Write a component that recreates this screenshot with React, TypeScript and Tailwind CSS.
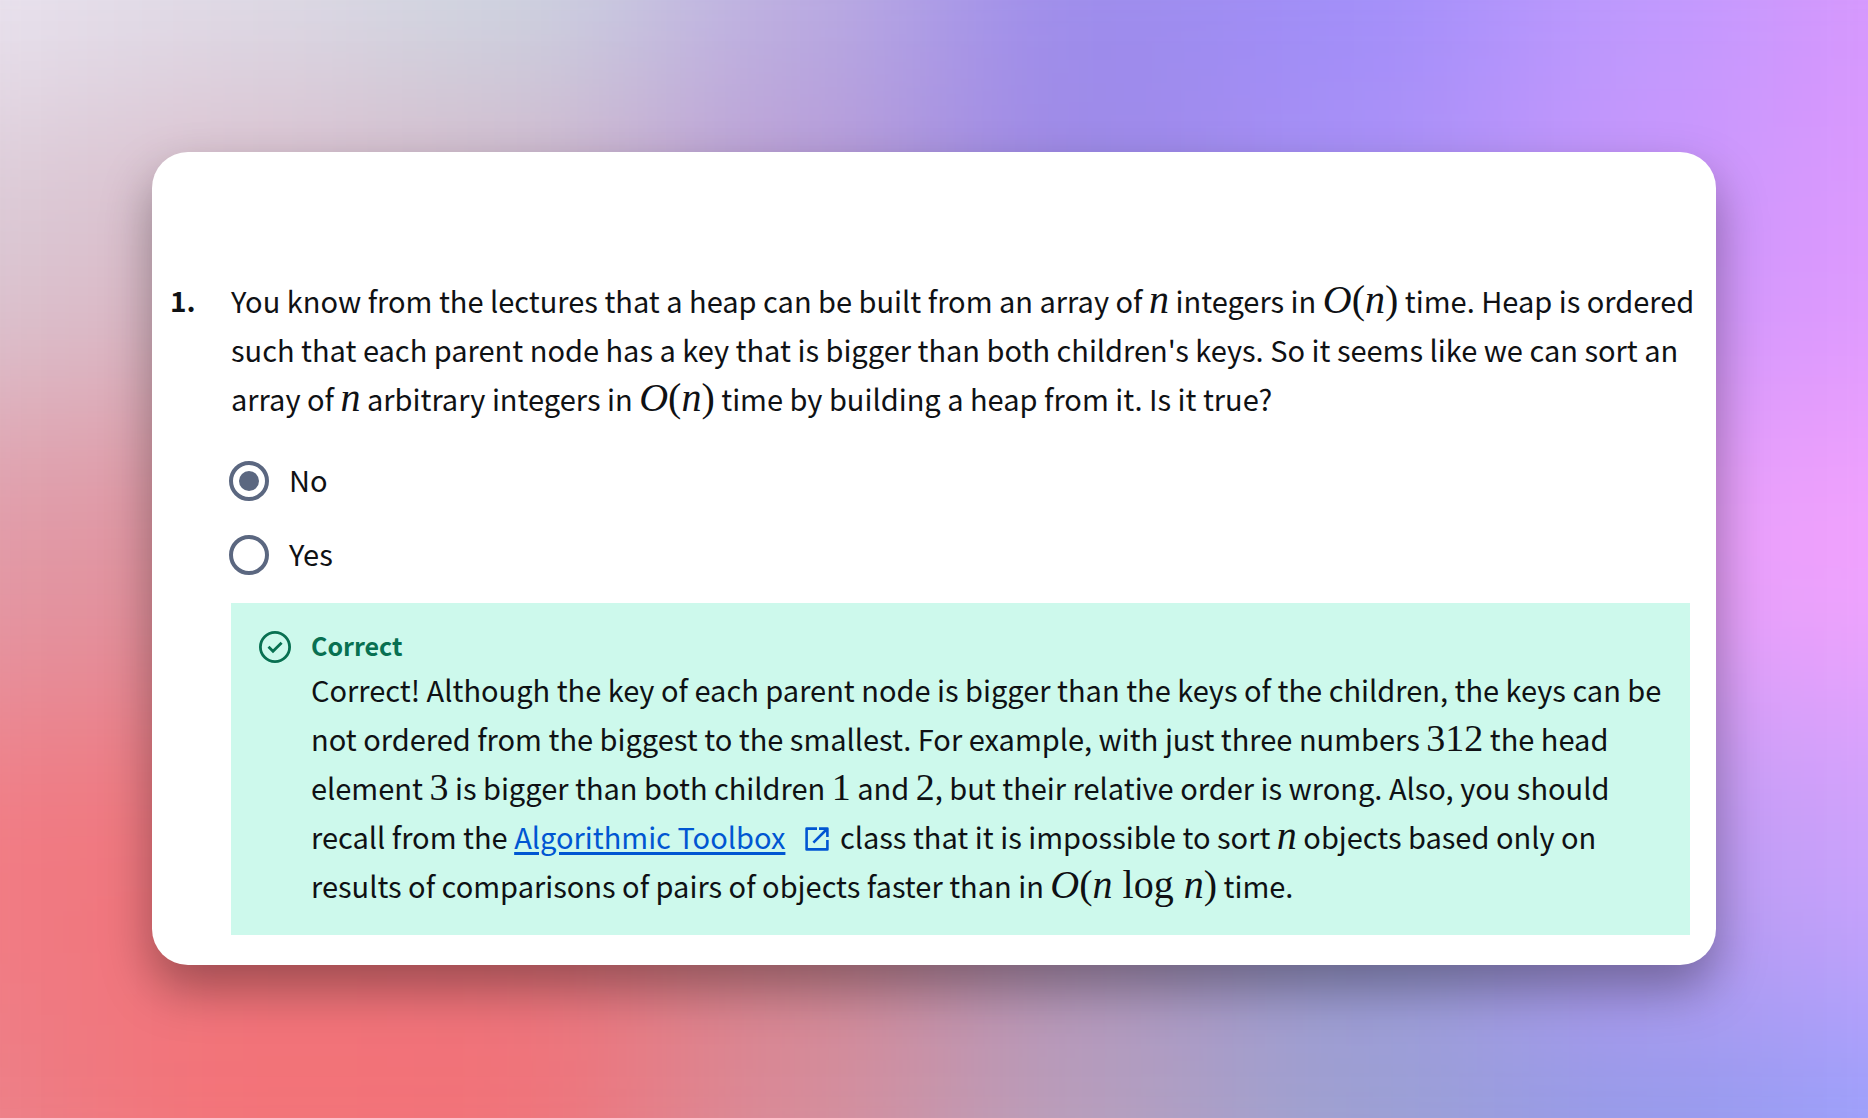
import React from "react";

const mesh = [
  "bg-[#ebe5f1]", "bg-[#dfdce8]", "bg-[#cdd6e1]", "bg-[#bcaee2]", "bg-[#9c8bec]", "bg-[#9f8df9]", "bg-[#bd99fe]", "bg-[#d996fd]",
  "bg-[#dac8d4]", "bg-[#dabbc9]", "bg-[#d3b4c8]", "bg-[#b99ad4]", "bg-[#9d88e6]", "bg-[#ac92f8]", "bg-[#cb97fc]", "bg-[#df99fe]",
  "bg-[#e299a6]", "bg-[#e0929e]", "bg-[#d6a0b0]", "bg-[#c09cc8]", "bg-[#a890e0]", "bg-[#c498f4]", "bg-[#e8a0fa]", "bg-[#f4a2fe]",
  "bg-[#f27a82]", "bg-[#f1757c]", "bg-[#ee757d]", "bg-[#d6858f]", "bg-[#b294bc]", "bg-[#9c9cd8]", "bg-[#bb9bf2]", "bg-[#cda2fd]",
  "bg-[#eb8089]", "bg-[#f47277]", "bg-[#f27177]", "bg-[#d88c9a]", "bg-[#b89fbc]", "bg-[#9ba0d2]", "bg-[#9299ea]", "bg-[#979ffd]",
];

function Sym({ children }: { children: React.ReactNode }) {
  return <i className="font-['Liberation_Serif',serif] text-[40px] leading-none">{children}</i>;
}

function Num({ children }: { children: React.ReactNode }) {
  return <span className="font-['Liberation_Serif',serif] text-[38px] leading-none">{children}</span>;
}

function BigO({ children }: { children: React.ReactNode }) {
  return (
    <span className="whitespace-nowrap font-['Liberation_Serif',serif] text-[40px] leading-none">
      <i>O</i>({children})
    </span>
  );
}

function Choice({ label, checked }: { label: string; checked?: boolean }) {
  return (
    <label className="flex h-10 cursor-pointer items-center gap-5">
      <input
        type="radio"
        name="answer"
        defaultChecked={checked}
        className="grid size-10 appearance-none place-items-center rounded-full border-4 border-[#5b6780] before:size-5 before:rounded-full checked:before:bg-[#5b6780]"
      />
      <span className="pb-1">{label}</span>
    </label>
  );
}

export default function App() {
  return (
    <div className="relative isolate flex min-h-screen items-start justify-center overflow-hidden p-[152px] font-['Noto_Sans_CJK_SC',sans-serif] text-[29px] leading-[49px] text-[#0f1114]">
      <div aria-hidden="true" className="absolute -inset-48 -z-10 grid grid-cols-8 grid-rows-5 blur-[96px]">
        {mesh.map((tone, i) => (
          <div key={i} className={tone} />
        ))}
      </div>
      <main className="flex w-full rounded-[36px] bg-white pt-[124px] pr-[26px] pb-[30px] pl-[18px] shadow-[0_24px_50px_rgba(0,0,0,0.35)]">
        <div className="w-[61px] shrink-0 text-[28px] font-bold">1.</div>
        <div className="min-w-0 flex-1">
          <p className="-mr-3">
            You know from the lectures that a heap can be built from an array of <Sym>n</Sym> integers in{" "}
            <BigO><i>n</i></BigO> time. Heap is ordered such that each parent node has a key that is bigger than both
            children's keys. So it seems like we can sort an array of <Sym>n</Sym> arbitrary integers in{" "}
            <BigO><i>n</i></BigO> time by building a heap from it. Is it true?
          </p>
          <fieldset aria-label="Answer" className="mt-[38px] -ml-0.5 flex flex-col gap-[34px]">
            <Choice label="No" checked />
            <Choice label="Yes" />
          </fieldset>
          <section className="mt-7 flex gap-5 bg-[#cdf9ec] pt-[22px] pr-6 pb-[25px] pl-7">
            <svg viewBox="0 0 32 32" className="mt-1.5 size-8 shrink-0" fill="none" stroke="#087051" strokeWidth="2.8">
              <circle cx="16" cy="16" r="14.6" />
              <path d="M9.5 15.8L14 20.2 22.6 11.8" />
            </svg>
            <div>
              <h2 className="text-[25px] leading-10 font-bold text-[#087051]">Correct</h2>
              <p>
                Correct! Although the key of each parent node is bigger than the keys of the children, the keys can be
                not ordered from the biggest to the smallest. For example, with just three numbers <Num>312</Num> the
                head element <Num>3</Num> is bigger than both children <Num>1</Num> and <Num>2</Num>, but their relative
                order is wrong. Also, you should recall from the{" "}
                <a href="#toolbox" className="text-[#0056d2] underline decoration-[3px] underline-offset-[3px]">Algorithmic Toolbox</a>
                <svg viewBox="0 0 24 24" className="mr-1 ml-5 inline size-6 align-[-2px]" fill="none" stroke="#0056d2" strokeWidth="2.6" strokeLinejoin="round">
                  <path d="M12 1.6H1.6v20.8h20.8V13M14 1.6h8.4V10M22 2L8.4 15.6" />
                </svg>{" "}
                class that it is impossible to sort <Sym>n</Sym> objects based only on results of comparisons of pairs
                of objects faster than in <BigO><i>n</i> log <i>n</i></BigO> time.
              </p>
            </div>
          </section>
        </div>
      </main>
    </div>
  );
}
